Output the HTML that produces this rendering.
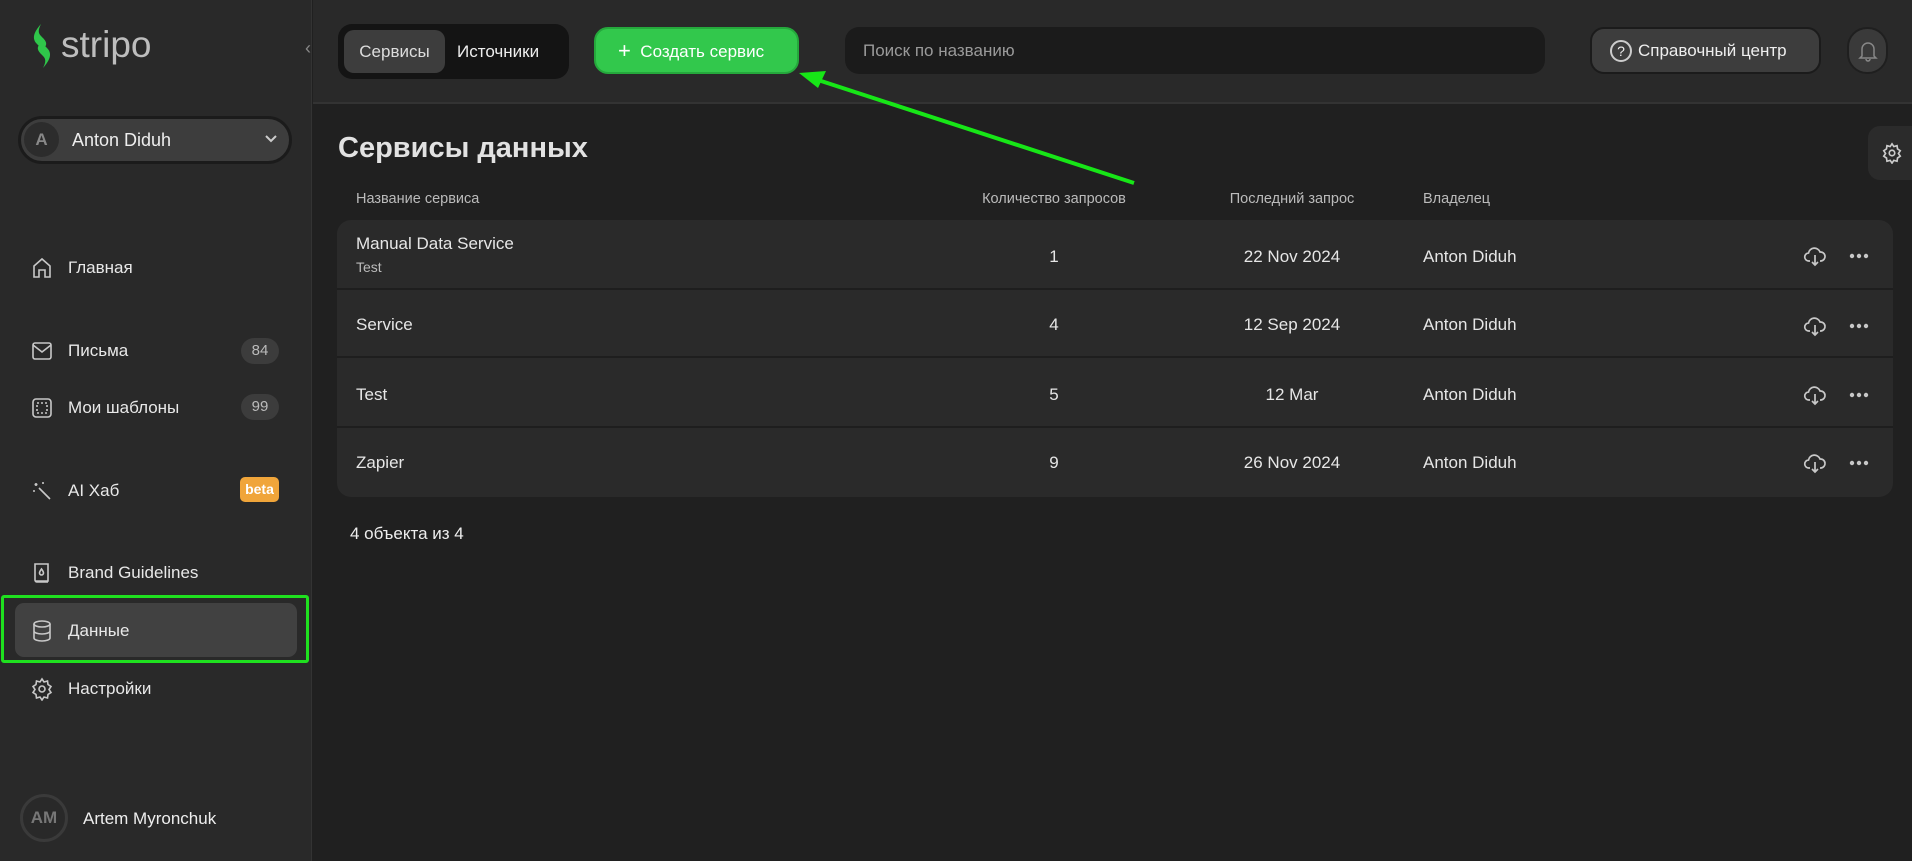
<!DOCTYPE html>
<html><head><meta charset="utf-8"><style>
*{box-sizing:border-box;margin:0;padding:0}
body{width:1912px;height:861px;background:#202020;font-family:"Liberation Sans","Noto Sans CJK SC",sans-serif;color:#e6e6e6;position:relative;overflow:hidden}
.abs{position:absolute}
.side{left:0;top:0;width:312px;height:861px;background:#292929;border-right:1px solid #333}
.top{left:313px;top:0;width:1599px;height:104px;background:#292929;border-bottom:2px solid #333}
.nav{position:absolute;left:30px;display:flex;align-items:center;font-size:17px;color:#e8e8e8}
.nav svg{width:24px;height:24px;margin-right:14px;fill:none;stroke:#c8c8c8;stroke-width:1.6}
.badge{position:absolute;left:241px;width:38px;height:26px;border-radius:13px;background:#3c3c3c;color:#bbb;font-size:15px;text-align:center;line-height:26px}
.row{position:absolute;left:0;width:100%;height:68px;border-bottom:2px solid #1e1e1e;font-size:17px}
.row span{position:absolute;top:25px}
.c{width:200px;text-align:center}
</style></head><body>
<div class="abs side"></div>
<svg class="abs" style="left:29px;top:23px" width="26" height="46" viewBox="0 0 26 46"><path d="M12 1 C4 10,3 16,8 21 C12 25,13 27,11 31 L16 24 C19 20,16 17,12 13 C9 10,9 7,12 1Z M14 45 C22 36,23 30,18 25 C14 21,13 19,15 15 L10 22 C7 26,10 29,14 33 C17 36,17 39,14 45Z" fill="#2fc64a"/></svg>
<div class="abs" style="left:61px;top:24px;font-size:37px;color:#bdbdbd">stripo</div>
<div class="abs" style="left:305px;top:38px;color:#888;font-size:18px">‹</div>
<div class="abs" style="left:18px;top:116px;width:274px;height:48px;border-radius:24px;background:#3d3d3d;border:3px solid #1b1b1b"></div>
<div class="abs" style="left:24px;top:122px;width:35px;height:35px;border-radius:50%;background:#2c2c2c;color:#888;font-size:17px;font-weight:bold;text-align:center;line-height:35px">A</div>
<div class="abs" style="left:72px;top:130px;font-size:18px;color:#eee">Anton Diduh</div>
<svg class="abs" style="left:264px;top:134px" width="14" height="10"><path d="M2 2l5 5 5-5" stroke="#ccc" stroke-width="2" fill="none"/></svg>

<div class="nav" style="top:256px"><svg viewBox="0 0 24 24"><path d="M4 21V10l8-7 8 7v11h-5v-7H9v7z"/></svg>Главная</div>
<div class="nav" style="top:339px"><svg viewBox="0 0 24 24"><rect x="3" y="4" width="18" height="16" rx="2"/><path d="M3 6l9 7 9-7"/></svg>Письма</div>
<div class="badge" style="top:338px">84</div>
<div class="nav" style="top:396px"><svg viewBox="0 0 24 24"><rect x="3" y="3" width="18" height="18" rx="3"/><rect x="7" y="7" width="10" height="10" stroke-dasharray="2 2"/></svg>Мои шаблоны</div>
<div class="badge" style="top:394px">99</div>
<div class="nav" style="top:479px"><svg viewBox="0 0 24 24"><path d="M9 9l11 11M6 4v3M4.5 5.5h3M13 3v2M3 12h2"/></svg>AI Хаб</div>
<div class="abs" style="left:240px;top:477px;width:39px;height:25px;border-radius:5px;background:#f0a53a;color:#fff;font-weight:bold;font-size:14px;text-align:center;line-height:25px">beta</div>
<div class="nav" style="top:561px"><svg viewBox="0 0 24 24"><path d="M5 3h13v17H6a1 1 0 0 1-1-1z M5 19a2 2 0 0 0 2 2h11"/><path d="M11.5 8c-1.5 2-2 3-2 4a2 2 0 0 0 4 0c0-1-.5-2-2-4z"/></svg>Brand Guidelines</div>
<div class="abs" style="left:1px;top:595px;width:308px;height:68px;border:3px solid #1fe01f;border-radius:3px"></div>
<div class="abs" style="left:15px;top:603px;width:282px;height:54px;border-radius:9px;background:#414141"></div>
<div class="nav" style="top:619px"><svg viewBox="0 0 24 24"><ellipse cx="12" cy="5" rx="8" ry="3"/><path d="M4 5v14c0 1.7 3.6 3 8 3s8-1.3 8-3V5M4 12c0 1.7 3.6 3 8 3s8-1.3 8-3"/></svg>Данные</div>
<div class="nav" style="top:677px"><svg viewBox="0 0 24 24"><circle cx="12" cy="12" r="3"/><path d="M12 2l2 3 3.5-1 .5 3.5 3 2-2 3 2 3-3 2-.5 3.5-3.5-1-2 3-2-3-3.5 1-.5-3.5-3-2 2-3-2-3 3-2 .5-3.5 3.5 1z"/></svg>Настройки</div>
<div class="abs" style="left:20px;top:794px;width:48px;height:48px;border-radius:50%;border:3px solid #3a3a3a;color:#777;font-weight:bold;font-size:17px;text-align:center;line-height:42px">AM</div>
<div class="abs" style="left:83px;top:809px;font-size:17px;color:#eee">Artem Myronchuk</div>

<div class="abs top"></div>
<div class="abs" style="left:338px;top:24px;width:231px;height:55px;border-radius:14px;background:#141414"></div>
<div class="abs" style="left:344px;top:30px;width:101px;height:43px;border-radius:10px;background:#3d3d3d;color:#ddd;font-size:17px;text-align:center;line-height:43px">Сервисы</div>
<div class="abs" style="left:457px;top:42px;font-size:17px;color:#eee">Источники</div>
<div class="abs" style="left:594px;top:27px;width:205px;height:47px;border-radius:14px;background:#32c84c;border:2px solid #25a83c;color:#fff;font-size:17px;line-height:43px;padding-left:22px"><span style="font-size:22px;vertical-align:-1px">+</span>&nbsp; Создать сервис</div>
<div class="abs" style="left:845px;top:27px;width:700px;height:47px;border-radius:14px;background:#1b1b1b;color:#9a9a9a;font-size:17px;line-height:47px;padding-left:18px">Поиск по названию</div>
<div class="abs" style="left:1590px;top:27px;width:231px;height:47px;border-radius:14px;background:#3d3d3d;border:2px solid #1b1b1b;color:#eee;font-size:17px;line-height:43px;padding-left:18px;display:flex;align-items:center"><span style="display:inline-block;width:22px;height:22px;border:2px solid #ccc;border-radius:50%;font-size:14px;text-align:center;line-height:18px;margin-right:6px">?</span>Справочный центр</div>
<div class="abs" style="left:1847px;top:27px;width:41px;height:47px;border-radius:20px;background:#3a3a3a;border:2px solid #1f1f1f"></div>
<svg class="abs" style="left:1858px;top:40px" width="20" height="22" viewBox="0 0 20 22"><path d="M4 16V9a6 6 0 0 1 12 0v7l2 2H2z M8 19a2 2 0 0 0 4 0" stroke="#888" stroke-width="1.5" fill="none"/></svg>

<div class="abs" style="left:338px;top:132px;font-size:29px;font-weight:bold;color:#e2e2e2">Сервисы данных</div>
<div class="abs" style="left:1868px;top:126px;width:50px;height:54px;border-radius:12px 0 0 12px;background:#2b2b2b"></div>
<svg class="abs" style="left:1881px;top:142px" width="22" height="22" viewBox="0 0 24 24" fill="none" stroke="#ccc" stroke-width="1.8"><circle cx="12" cy="12" r="3"/><path d="M12 2l2 3 3.5-1 .5 3.5 3 2-2 3 2 3-3 2-.5 3.5-3.5-1-2 3-2-3-3.5 1-.5-3.5-3-2 2-3-2-3 3-2 .5-3.5 3.5 1z"/></svg>
<div class="abs" style="left:356px;top:191px;font-size:14.5px;color:#bbb">Название сервиса</div>
<div class="abs" style="left:954px;top:191px;width:200px;text-align:center;font-size:14.5px;color:#bbb">Количество запросов</div>
<div class="abs" style="left:1192px;top:191px;width:200px;text-align:center;font-size:14.5px;color:#bbb">Последний запрос</div>
<div class="abs" style="left:1423px;top:191px;font-size:14.5px;color:#bbb">Владелец</div>

<div class="abs" style="left:337px;top:220px;width:1556px;height:277px;border-radius:14px;background:#2a2a2a;overflow:hidden">
<div class="row" style="top:0;height:70px"><span style="left:19px;top:14px">Manual Data Service</span><span style="left:19px;top:39px;font-size:14px;color:#bbb">Test</span><span class="c" style="left:617px;top:27px">1</span><span class="c" style="left:855px;top:27px">22 Nov 2024</span><span style="left:1086px;top:27px">Anton Diduh</span></div>
<div class="row" style="top:70px"><span style="left:19px">Service</span><span class="c" style="left:617px">4</span><span class="c" style="left:855px">12 Sep 2024</span><span style="left:1086px">Anton Diduh</span></div>
<div class="row" style="top:140px"><span style="left:19px">Test</span><span class="c" style="left:617px">5</span><span class="c" style="left:855px">12 Mar</span><span style="left:1086px">Anton Diduh</span></div>
<div class="row" style="top:208px;border:none"><span style="left:19px">Zapier</span><span class="c" style="left:617px">9</span><span class="c" style="left:855px">26 Nov 2024</span><span style="left:1086px">Anton Diduh</span></div>
</div>
<svg class="abs" width="0" height="0"><defs><g id="ic"><path d="M7 17H6a4 4 0 0 1-.5-8A6 6 0 0 1 17 8a4.5 4.5 0 0 1 1 9h-1M12 11v10M9 18l3 3 3-3" stroke="#c8c8c8" stroke-width="1.7" fill="none"/><circle cx="49" cy="12" r="2.2" fill="#c8c8c8"/><circle cx="56" cy="12" r="2.2" fill="#c8c8c8"/><circle cx="63" cy="12" r="2.2" fill="#c8c8c8"/></g></defs></svg>
<svg class="abs" style="left:1803px;top:244px" width="70" height="26"><use href="#ic"/></svg>
<svg class="abs" style="left:1803px;top:314px" width="70" height="26"><use href="#ic"/></svg>
<svg class="abs" style="left:1803px;top:383px" width="70" height="26"><use href="#ic"/></svg>
<svg class="abs" style="left:1803px;top:451px" width="70" height="26"><use href="#ic"/></svg>
<div class="abs" style="left:350px;top:524px;font-size:17px;color:#eee">4 объекта из 4</div>

<svg class="abs" style="left:0;top:0" width="1912" height="861"><line x1="1134" y1="183" x2="815" y2="79" stroke="#17e617" stroke-width="4"/><polygon points="799,73 826,71 818,88" fill="#17e617"/></svg>
</body></html>
